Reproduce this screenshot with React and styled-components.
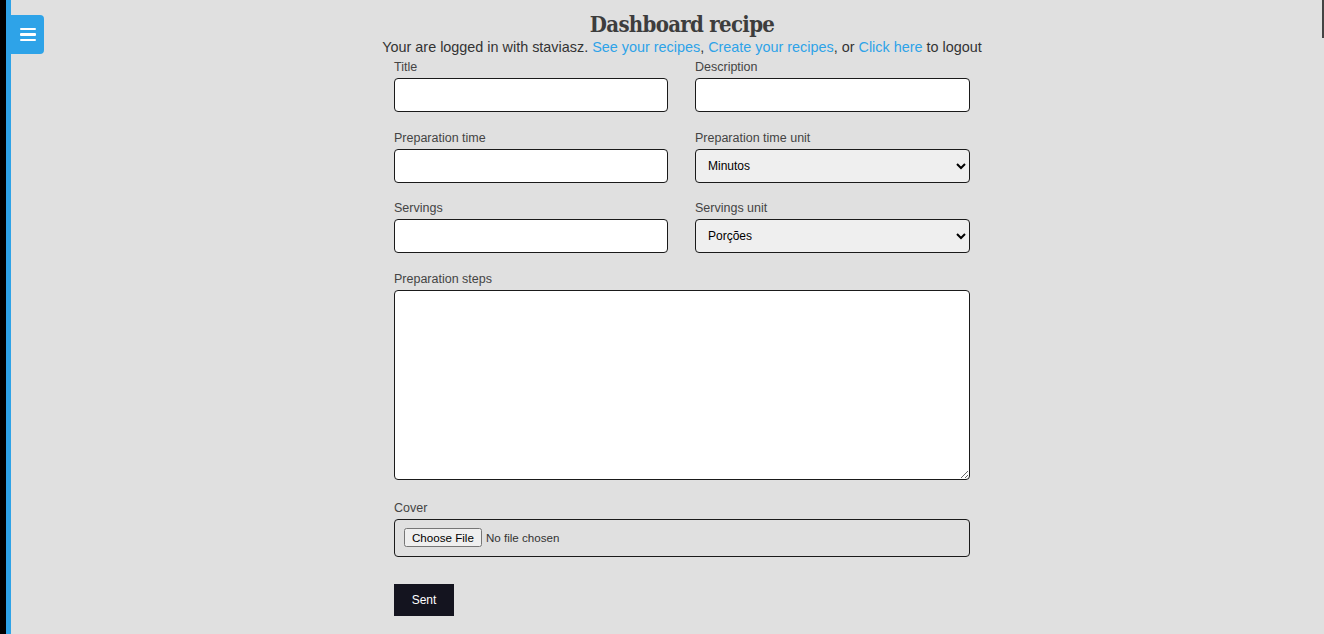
import React from 'react';
import styled, { createGlobalStyle } from 'styled-components';

const GlobalStyle = createGlobalStyle`
    html, body {
        margin: 0;
        padding: 0;
        background: #e0e0e0;
        font-family: "Liberation Sans", Arial, sans-serif;
        color: #333;
    }
    * {
        box-sizing: border-box;
    }
`;

class App extends React.Component {
    render() {
        return (
            <Page>
                <GlobalStyle />
                <Rail>
                    <MenuButton aria-label="menu">
                        <Bars>
                            <span />
                            <span />
                            <span />
                        </Bars>
                    </MenuButton>
                </Rail>
                <Main>
                    <Title>Dashboard recipe</Title>
                    <Subtitle>
                        Your are logged in with staviasz. <Link href="#">See your recipes</Link>, <Link href="#">Create your recipes</Link>, or <Link href="#">Click here</Link> to logout
                    </Subtitle>
                    <Form onSubmit={e => e.preventDefault()}>
                        <Grid>
                            <Field>
                                <Label>Title</Label>
                                <Input type="text" />
                            </Field>
                            <Field>
                                <Label>Description</Label>
                                <Input type="text" />
                            </Field>
                            <Field>
                                <Label>Preparation time</Label>
                                <Input type="text" />
                            </Field>
                            <Field>
                                <Label>Preparation time unit</Label>
                                <Select defaultValue="min">
                                    <option value="min">Minutos</option>
                                    <option value="h">Horas</option>
                                </Select>
                            </Field>
                            <Field>
                                <Label>Servings</Label>
                                <Input type="text" />
                            </Field>
                            <Field>
                                <Label>Servings unit</Label>
                                <Select defaultValue="p">
                                    <option value="p">Porções</option>
                                    <option value="u">Unidades</option>
                                </Select>
                            </Field>
                            <Field wide>
                                <Label>Preparation steps</Label>
                                <TextArea />
                            </Field>
                            <Field wide>
                                <Label>Cover</Label>
                                <FileBox>
                                    <FileInput type="file" />
                                </FileBox>
                            </Field>
                        </Grid>
                        <SendButton type="submit">Sent</SendButton>
                    </Form>
                </Main>
                <ScrollThumb />
            </Page>
        )
    }
}

export default App;

const Page = styled.div`
    position: relative;
    display: flex;
    min-height: 100vh;
`;

const Rail = styled.div`
    position: relative;
    flex: 0 0 11px;
    border-left: 6px solid #000;
    background: #2ea3e8;
`;

const MenuButton = styled.button`
    position: absolute;
    left: 5px;
    top: 15px;
    width: 33px;
    height: 39px;
    padding: 0;
    border: none;
    border-radius: 0 4px 4px 0;
    background: #2ea3e8;
    display: flex;
    align-items: center;
    justify-content: center;
    cursor: pointer;
`;

const Bars = styled.div`
    display: flex;
    flex-direction: column;
    gap: 3px;
    span {
        display: block;
        width: 16px;
        height: 2.6px;
        background: #fff;
        border-radius: 1px;
    }
`;

const Main = styled.main`
    flex: 1;
    display: flex;
    flex-direction: column;
    align-items: center;
    padding: 10px 0 18px 29px;
`;

const Title = styled.h1`
    margin: 0;
    font-family: "DejaVu Serif", serif;
    font-stretch: condensed;
    font-weight: bold;
    font-size: 22px;
    letter-spacing: -0.7px;
    line-height: 28px;
    color: #3d3d3d;
`;

const Subtitle = styled.p`
    margin: 0 0 3px;
    font-size: 14.4px;
    line-height: 18px;
    color: #333;
`;

const Link = styled.a`
    color: #2ea3e8;
    text-decoration: none;
`;

const Form = styled.form`
    width: 576px;
`;

const Grid = styled.div`
    display: grid;
    grid-template-columns: 274px 275px;
    column-gap: 27px;
`;

const Field = styled.div`
    grid-column: ${props => props.wide ? '1 / -1' : 'auto'};
    margin-bottom: 17.7px;
`;

const Label = styled.label`
    display: block;
    font-size: 12.5px;
    line-height: 15px;
    padding-top: 1px;
    color: #444;
    margin-bottom: 3px;
`;

const Input = styled.input`
    display: block;
    width: 100%;
    height: 34px;
    border: 1px solid #1a1a1a;
    border-radius: 4px;
    background: #fff;
    padding: 0 10px;
    font-size: 13px;
    font-family: "Liberation Sans", Arial, sans-serif;
`;

const Select = styled.select`
    display: block;
    width: 100%;
    height: 34px;
    border: 1px solid #1a1a1a;
    border-radius: 4px;
    background: #efefef;
    padding: 0 8px;
    font-size: 12px;
    font-family: "Liberation Sans", Arial, sans-serif;
    color: #000;
`;

const TextArea = styled.textarea`
    width: 100%;
    height: 190px;
    border: 1px solid #1a1a1a;
    border-radius: 4px;
    background: #fff;
    padding: 8px 10px;
    font-family: "Liberation Sans", Arial, sans-serif;
    vertical-align: top;
    margin: 0 0 2px;
`;

const FileBox = styled.div`
    display: flex;
    align-items: center;
    height: 38px;
    padding: 0 9px;
    border: 1px solid #1a1a1a;
    border-radius: 4px;
`;

const FileInput = styled.input`
    font-size: 11.6px;
    font-family: "Liberation Sans", Arial, sans-serif;
    color: #333;
`;

const SendButton = styled.button`
    margin-top: 10px;
    width: 60px;
    height: 32px;
    border: none;
    background: #14141f;
    color: #fff;
    font-size: 12px;
    font-family: "Liberation Sans", Arial, sans-serif;
    cursor: pointer;
`;

const ScrollThumb = styled.div`
    position: absolute;
    top: 0;
    right: 0;
    width: 2px;
    height: 38px;
    background: #444;
`;
